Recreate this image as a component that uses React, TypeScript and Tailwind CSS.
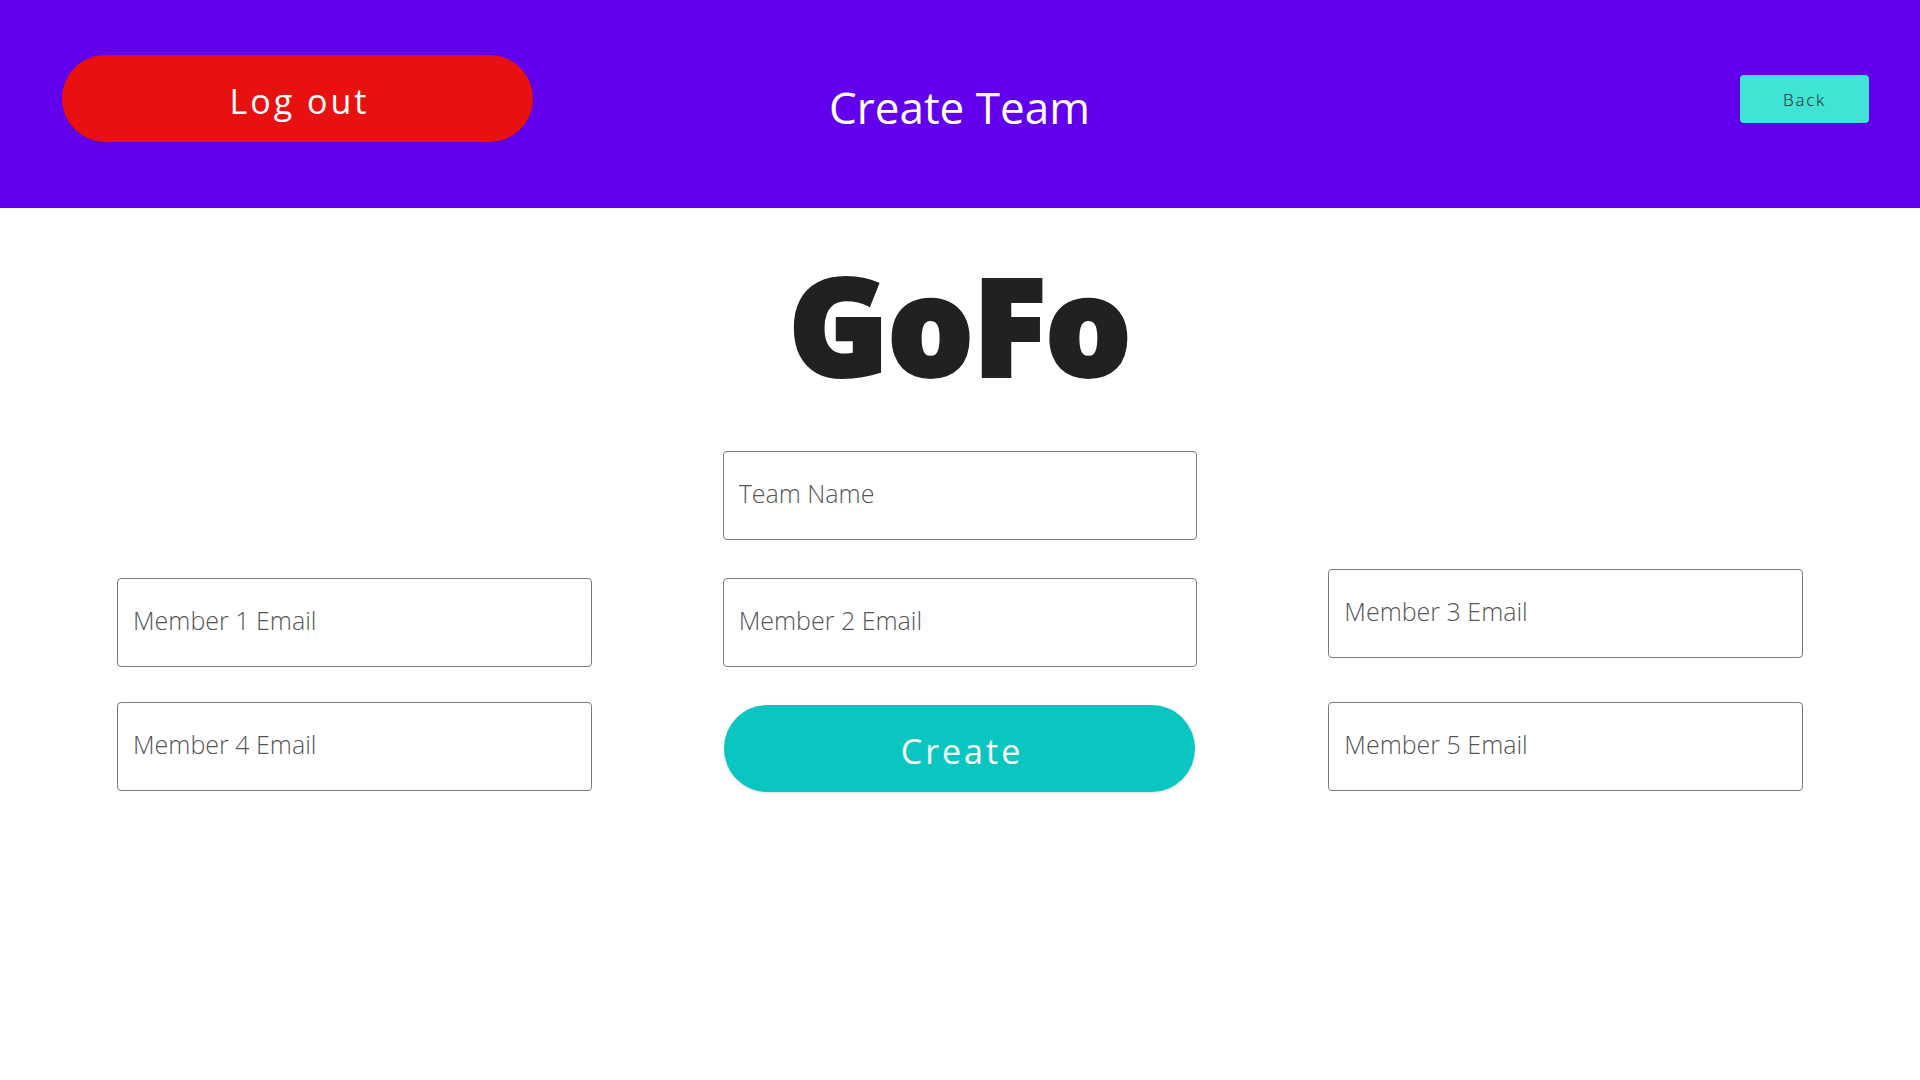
import type { ReactNode } from "react";

function Field({ label, type = "text" }: { label: string; type?: "text" | "email" }) {
  return (
    <input
      type={type}
      aria-label={label}
      placeholder={label}
      className="h-[89px] w-full rounded border border-[#7b7b7b] bg-white px-[15px] pb-1.5 text-[25px] font-light text-[#212121] placeholder:text-[#555555] focus:border-[#6200ee] focus:outline-none"
    />
  );
}

function PillButton({ color, children }: { color: string; children: ReactNode }) {
  return (
    <button
      type="button"
      className={`h-[87px] w-full max-w-[471px] rounded-full pt-1.5 pl-1 text-[34px] tracking-[3px] text-white shadow-sm ${color}`}
    >
      {children}
    </button>
  );
}

export default function App() {
  return (
    <div className="min-h-screen bg-white font-['Open_Sans','Noto_Sans',sans-serif]">
      <header className="grid grid-cols-3 items-center bg-[#6200ee] pt-[55px] pr-[51px] pb-[66px] pl-[62px]">
        <PillButton color="bg-[#e8110f]">Log out</PillButton>
        <h1 className="pt-4 pr-3 text-center text-[44px] leading-none text-white">Create Team</h1>
        <button
          type="button"
          className="h-12 w-[129px] justify-self-end rounded bg-[#40e4d4] pt-0.5 text-[17px] font-light tracking-widest text-[#212121] shadow-sm"
        >
          Back
        </button>
      </header>

      <main className="px-[117px] pt-[42px]">
        <p className="text-center text-[134px] leading-[148px] font-black text-[#212121] [-webkit-text-stroke:4px_#212121] font-['Noto_Sans',sans-serif]">
          GoFo
        </p>

        <form className="mt-[53px] grid grid-cols-3 items-end gap-x-[131px]">
          <div className="flex flex-col gap-[35px] pb-px">
            <Field label="Member 1 Email" type="email" />
            <Field label="Member 4 Email" type="email" />
          </div>
          <div className="flex flex-col items-center gap-[38px]">
            <Field label="Team Name" />
            <Field label="Member 2 Email" type="email" />
            <PillButton color="bg-[#0ac6c1]">Create</PillButton>
          </div>
          <div className="flex flex-col gap-11 pb-px">
            <Field label="Member 3 Email" type="email" />
            <Field label="Member 5 Email" type="email" />
          </div>
        </form>
      </main>
    </div>
  );
}
